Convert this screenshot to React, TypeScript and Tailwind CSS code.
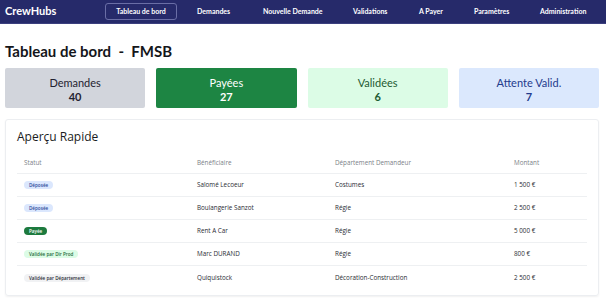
const navItems = ['Demandes', 'Nouvelle Demande', 'Validations', 'A Payer', 'Paramètres', 'Administration']

const stats = [
  { label: 'Demandes', value: 40, box: 'bg-[#d2d5dc]', text: 'text-[#1f2230]' },
  { label: 'Payées', value: 27, box: 'bg-[#1d8543]', text: 'text-white' },
  { label: 'Validées', value: 6, box: 'bg-[#dcfce6]', text: 'text-[#1e5a32]' },
  { label: 'Attente Valid.', value: 7, box: 'bg-[#dbe8fd]', text: 'text-[#233b8c]' },
]

const rows = [
  { status: 'Déposée', badge: 'bg-[#dbe7fd] text-[#2d4a9a]', who: 'Salomé Lecoeur', dept: 'Costumes', amount: '1 500 €' },
  { status: 'Déposée', badge: 'bg-[#dbe7fd] text-[#2d4a9a]', who: 'Boulangerie Sanzot', dept: 'Régie', amount: '2 500 €' },
  { status: 'Payée', badge: 'bg-[#1d7a3e] text-white', who: 'Rent A Car', dept: 'Régie', amount: '5 000 €' },
  { status: 'Validée par Dir Prod', badge: 'bg-[#dcfce6] text-[#1e6a38]', who: 'Marc DURAND', dept: 'Régie', amount: '800 €' },
  { status: 'Validée par Département', badge: 'bg-[#f1f2f4] text-[#2a2d36]', who: 'Quiquistock', dept: 'Décoration-Construction', amount: '2 500 €' },
]

export default function App() {
  return (
    <div className="w-[606px] h-[304px] bg-white overflow-hidden font-['Lato',sans-serif]">
      {/* Top navigation */}
      <div className="h-[24px] bg-[#262a6a] border-b border-[#3b3f7e] flex items-center pl-[5px]">
        <div className="text-white font-bold text-[11px] w-[100px]">CrewHubs</div>
        <div className="flex items-center text-white font-bold text-[7px]">
          <div className="h-[17px] w-[72px] flex items-center justify-center border border-[#6a6ea6] rounded-[3px]">
            Tableau de bord
          </div>
          <div className="w-[20px]" />
          <div className="w-[36px]">{navItems[0]}</div>
          <div className="w-[30px]" />
          <div className="w-[62px]">{navItems[1]}</div>
          <div className="w-[28px]" />
          <div className="w-[38px]">{navItems[2]}</div>
          <div className="w-[28px]" />
          <div className="w-[27px]">{navItems[3]}</div>
          <div className="w-[28px]" />
          <div className="w-[38px]">{navItems[4]}</div>
          <div className="w-[28px]" />
          <div>{navItems[5]}</div>
        </div>
      </div>

      <div className="px-[5px]">
        <h1 className="mt-[18px] text-[15px] leading-[18px] font-bold text-[#15161a] whitespace-pre">
          Tableau de bord  -  FMSB
        </h1>

        {/* Stat cards */}
        <div className="mt-[8px] grid grid-cols-4 gap-[11px] pr-[2px]">
          {stats.map((s) => (
            <div
              key={s.label}
              className={`h-[40px] rounded-[2px] flex flex-col items-center justify-center pt-[3px] ${s.box} ${s.text}`}
            >
              <div className="text-[11px] leading-[14px]">{s.label}</div>
              <div className="text-[11px] leading-[13px] font-bold">{s.value}</div>
            </div>
          ))}
        </div>

        {/* Quick overview */}
        <div className="mt-[11px] mr-[2px] h-[177px] border border-[#eceef1] rounded-[3px] shadow-[0_1px_2px_rgba(0,0,0,0.06)] px-[11px] font-['Open_Sans',sans-serif]">
          <div className="mt-[9px] text-[12px] leading-[15px] font-medium text-[#1a1c22]">Aperçu Rapide</div>
          <div className="mt-[8px] text-[6.3px] text-[#2a2c33]">
            <div className="h-[22px] flex items-center border-b border-[#eef0f2] text-[#7b7f88]">
              <div className="w-[180px] pl-[7px]">Statut</div>
              <div className="w-[138px]">Bénéficiaire</div>
              <div className="w-[179px]">Département Demandeur</div>
              <div>Montant</div>
            </div>
            {rows.map((r, i) => (
              <div
                key={i}
                className={`h-[23px] flex items-center ${i < rows.length - 1 ? 'border-b border-[#eef0f2]' : ''}`}
              >
                <div className="w-[180px] pl-[7px]">
                  <span className={`inline-block rounded-full px-[5px] h-[8px] leading-[8px] text-[4.6px] font-semibold ${r.badge}`}>
                    {r.status}
                  </span>
                </div>
                <div className="w-[138px]">{r.who}</div>
                <div className="w-[179px]">{r.dept}</div>
                <div>{r.amount}</div>
              </div>
            ))}
          </div>
        </div>
      </div>
    </div>
  )
}
